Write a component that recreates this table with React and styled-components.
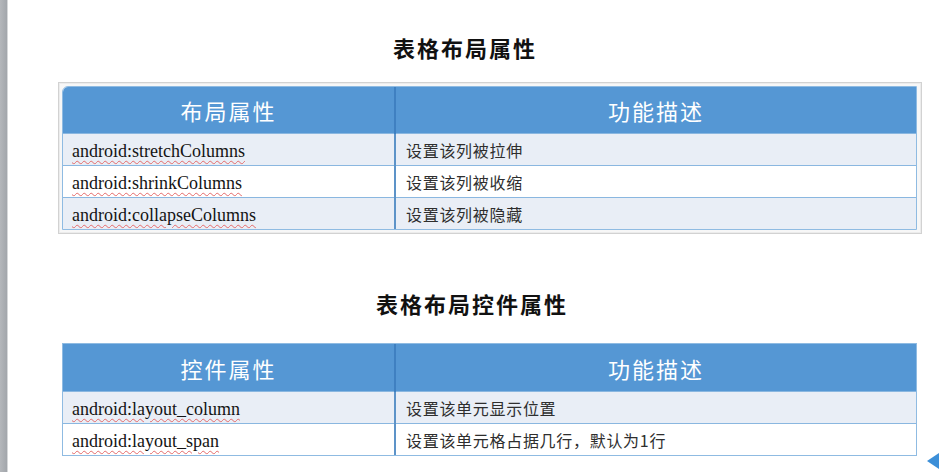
import React from 'react';
import styled, { createGlobalStyle } from 'styled-components';

const GlobalStyle = createGlobalStyle`
  html, body {
    margin: 0;
    padding: 0;
    background: #ffffff;
  }
  body {
    font-family: "Noto Sans CJK SC", "Noto Sans", sans-serif;
  }
`;

const Page = styled.div`
  position: relative;
  display: flex;
  width: 939px;
  height: 472px;
  overflow: hidden;
  background: #ffffff;
`;

const SideBar = styled.div`
  width: 7px;
  flex: none;
  background: linear-gradient(to right, #b4b7bb, #a2a6ab);
  border-right: 1px solid #d6d8da;
`;

const Slide = styled.main`
  flex: 1;
  display: flex;
  flex-direction: column;
  padding: 32px 0 0 50px;
`;

const Title = styled.h2`
  box-sizing: border-box;
  margin: ${(p) => p.$top}px 0 0;
  padding-right: ${(p) => p.$shift}px;
  width: 864px;
  text-align: center;
  font-family: "Noto Sans CJK SC", sans-serif;
  font-size: 22px;
  font-weight: 700;
  letter-spacing: 2px;
  line-height: 30px;
  color: #111111;
`;

const Frame = styled.div`
  margin: ${(p) => p.$top}px 0 0 ${(p) => (p.$framed ? 0 : 5)}px;
  width: ${(p) => (p.$framed ? 854 : 853)}px;
  padding: ${(p) => (p.$framed ? '4px' : '0')};
  border: ${(p) => (p.$framed ? '1px solid #d2d2d2' : 'none')};
  background: ${(p) => (p.$framed ? '#f7f7f7' : 'transparent')};
  box-shadow: ${(p) => (p.$framed ? 'inset 0 0 0 1px #ececec' : 'none')};
`;

const Table = styled.table`
  width: 853px;
  border-collapse: collapse;
  table-layout: fixed;
  border-top-left-radius: ${(p) => (p.$round ? 5 : 0)}px;
  overflow: hidden;
  background: #ffffff;
  outline: 1px solid #8fbbe2;
`;

const HeadCell = styled.th`
  height: ${(p) => p.$h}px;
  padding: 0;
  background: #5597d4;
  color: #ffffff;
  font-family: "Noto Sans CJK SC", sans-serif;
  font-size: 22px;
  font-weight: 400;
  letter-spacing: 2px;
  text-align: center;
  border-right: ${(p) => (p.$first ? '2px solid #3f80c1' : 'none')};
`;

const Row = styled.tr`
  background: ${(p) => (p.$shade ? '#e9eef6' : '#ffffff')};
`;

const Cell = styled.td`
  height: 31px;
  padding: 0 0 0 ${(p) => (p.$first ? 9 : 10)}px;
  border-top: 1px solid #8ab7e0;
  border-right: ${(p) => (p.$first ? '2px solid #5d93c8' : 'none')};
  vertical-align: middle;
  white-space: nowrap;
`;

const Attr = styled.span`
  font-family: "Liberation Serif", serif;
  font-size: 18px;
  color: #141414;
  text-decoration: underline wavy #e46a6a;
  text-decoration-thickness: 1px;
  text-underline-offset: 3px;
`;

const Desc = styled.span`
  font-family: "Noto Sans CJK SC", sans-serif;
  font-size: 16px;
  letter-spacing: 0.7px;
  color: #2e2e2e;
`;

const NavArrow = styled.div`
  position: absolute;
  right: 0;
  bottom: 3px;
  width: 0;
  height: 0;
  border-top: 8px solid transparent;
  border-bottom: 8px solid transparent;
  border-right: 12px solid #3c8fd8;
`;

const layoutRows = [
  ['android:stretchColumns', '设置该列被拉伸'],
  ['android:shrinkColumns', '设置该列被收缩'],
  ['android:collapseColumns', '设置该列被隐藏'],
];

const cellRows = [
  ['android:layout_column', '设置该单元显示位置'],
  ['android:layout_span', '设置该单元格占据几行，默认为1行'],
];

const PropTable = ({ head, rows, headHeight, round }) => (
  <Table $round={round}>
    <colgroup>
      <col style={{ width: 332 }} />
      <col style={{ width: 521 }} />
    </colgroup>
    <thead>
      <tr>
        <HeadCell $first $h={headHeight}>{head}</HeadCell>
        <HeadCell $h={headHeight}>功能描述</HeadCell>
      </tr>
    </thead>
    <tbody>
      {rows.map(([attr, desc], i) => (
        <Row key={attr} $shade={i % 2 === 0}>
          <Cell $first><Attr>{attr}</Attr></Cell>
          <Cell><Desc>{desc}</Desc></Cell>
        </Row>
      ))}
    </tbody>
  </Table>
);

export default function App() {
  return (
    <Page>
      <GlobalStyle />
      <SideBar />
      <Slide>
        <Title $top={0} $shift={50}>表格布局属性</Title>
        <Frame $framed $top={20}>
          <PropTable head="布局属性" rows={layoutRows} headHeight={46} round />
        </Frame>
        <Title $top={54} $shift={36}>表格布局控件属性</Title>
        <Frame $top={26}>
          <PropTable head="控件属性" rows={cellRows} headHeight={47} />
        </Frame>
      </Slide>
      <NavArrow />
    </Page>
  );
}
